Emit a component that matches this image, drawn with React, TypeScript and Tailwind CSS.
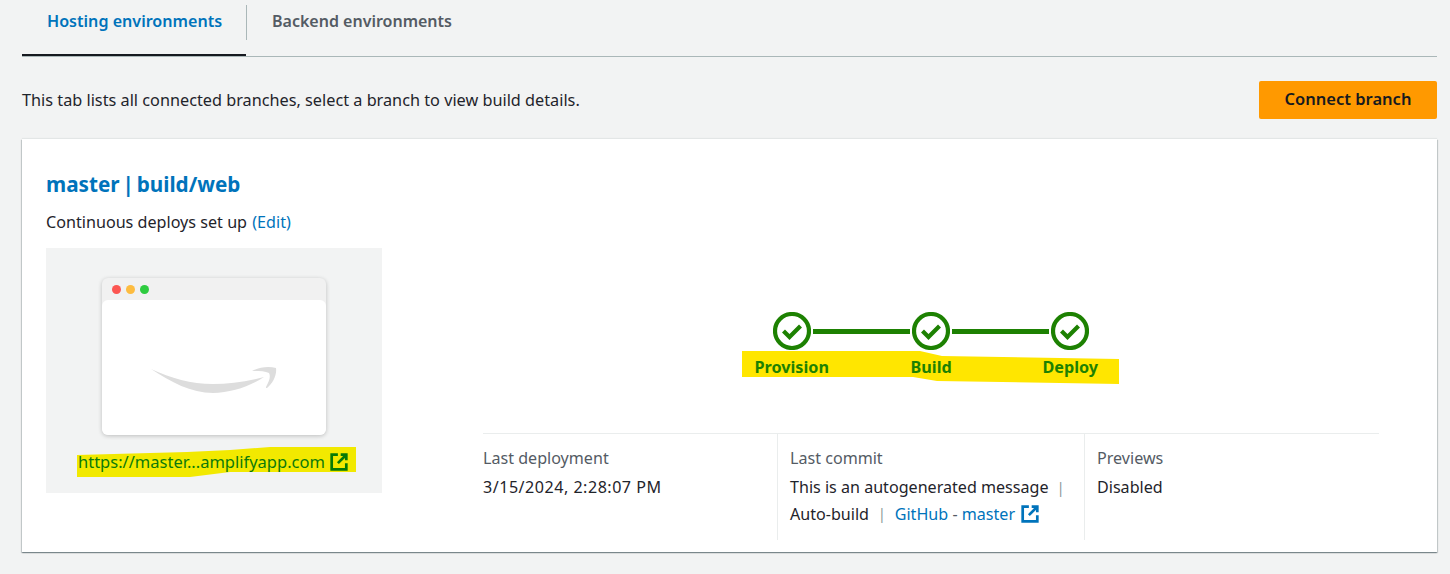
import React from 'react';

const font = { fontFamily: '"Noto Sans", "Open Sans", Arial, sans-serif' };

const ExternalIcon = ({ className }: { className?: string }) => (
  <svg viewBox="0 0 16 16" className={className} fill="none" stroke="currentColor" strokeWidth="2.4">
    <path d="M7 1.5H1.5v13h13V9" />
    <path d="M9.5 1.5h5v5" />
    <path d="M14.5 1.5 7 9" />
  </svg>
);

const CheckStep = () => (
  <svg viewBox="0 0 38 38" className="w-[38px] h-[38px] shrink-0" fill="none">
    <circle cx="19" cy="19" r="17" stroke="#1d8102" strokeWidth="4.2" />
    <path d="M10.5 19l6 6 11-11" stroke="#1d8102" strokeWidth="4.2" />
  </svg>
);

const Line = () => <div className="w-[97px] h-[5px] bg-[#1d8102] mx-auto" />;

const Stepper = () => (
  <div className="relative w-[377px] h-[90px]">
    {/* marker highlight drawn over the screenshot */}
    <svg className="absolute left-0 top-[39px]" width="377" height="34" viewBox="0 0 377 34">
      <path d="M0 0 L178 0 L200 5 L377 8 L377 33 L195 30 L171 26 L0 26 Z" fill="#ffe600" />
    </svg>
    <div className="relative flex pl-[31px]">
      <CheckStep />
      <div className="w-[101px] flex items-center"><Line /></div>
      <CheckStep />
      <div className="w-[101px] flex items-center"><Line /></div>
      <CheckStep />
    </div>
    <div className="relative flex mt-[6px] text-[16.2px] leading-[22px] font-bold text-[#1d8102]">
      <span className="w-[87px] pl-[13px] whitespace-nowrap">Provision</span>
      <span className="ml-[82px] w-[40px] whitespace-nowrap">Build</span>
      <span className="ml-[92px] whitespace-nowrap">Deploy</span>
    </div>
  </div>
);

const BrowserPreview = () => (
  <div className="w-[336px] h-[245px] bg-[#f2f3f3] flex flex-col items-center pt-[30px] shrink-0">
    <div className="w-[224px] h-[157px] rounded-[6px] bg-[#f1f1f1] shadow-[0_1px_4px_rgba(0,0,0,0.22)] flex flex-col">
      <div className="h-[22px] flex items-center gap-[5px] pl-[10px] shrink-0">
        <span className="w-[9px] h-[9px] rounded-full bg-[#fc5652]" />
        <span className="w-[9px] h-[9px] rounded-full bg-[#fdbc40]" />
        <span className="w-[9px] h-[9px] rounded-full bg-[#2ecc40]" />
      </div>
      <div className="flex-1 bg-white rounded-[6px] flex items-start justify-center pt-[66px]">
        <svg width="126" height="28" viewBox="0 0 126 28">
          <path d="M0 3 C20 16 40 27 62 27 C80 27 100 20 113 11 C95 16 78 18 62 18 C40 18 20 12 0 3 Z" fill="#dddddd" />
          <path d="M101 5 C108 1 118 0 125 2 C126 9 122 17 116 22 C115 22 115 22 115 21 C118 15 120 11 118 7 C114 5 108 5 101 5 Z" fill="#dddddd" />
        </svg>
      </div>
    </div>
    <div className="relative w-[279px] h-[30px] mt-[12px] ml-[5px]">
      <svg className="absolute left-0 top-0" width="279" height="30" viewBox="0 0 279 30">
        <path d="M0 8 L110 5 L153 3 L193 0 L279 0 L279 25 L153 25 L113 30 L0 30 Z" fill="#f2e900" />
      </svg>
      <div className="relative flex items-center pl-[1px] pt-[5px] text-[16.5px] leading-[20px] text-[#0b7a0b] whitespace-nowrap">
        https://master...amplifyapp.com
        <ExternalIcon className="w-[18px] h-[18px] ml-[5px] text-[#067a06]" />
      </div>
    </div>
  </div>
);

const App = () => (
  <div className="w-[1450px] h-[574px] overflow-hidden bg-[#f2f3f3] pl-[22px] pr-[13px] text-[#1f242b]" style={font}>
    <div className="h-[57px] border-b border-[#aab7b8] flex items-start">
      <div className="w-[224px] h-[56px] border-b-2 border-[#16191f] flex items-start pt-[10px] pl-[25px] text-[16.1px] leading-[22px] font-semibold text-[#0073bb] whitespace-nowrap">
        Hosting environments
      </div>
      <div className="w-px h-[35px] bg-[#aab7b8] mt-[5px]" />
      <div className="pl-[25px] pt-[10px] text-[16px] leading-[22px] font-semibold text-[#545b64] whitespace-nowrap">
        Backend environments
      </div>
    </div>

    <div className="flex items-center justify-between h-[82px] pt-[3px]">
      <p className="text-[16.25px] leading-[22px]">This tab lists all connected branches, select a branch to view build details.</p>
      <button className="w-[178px] h-[38px] rounded-[2px] bg-[#ff9900] text-[16.5px] font-semibold text-[#16191f]">Connect branch</button>
    </div>

    <div className="h-[413px] bg-white shadow-[0_1px_1px_rgba(0,28,36,0.3),1px_1px_1px_rgba(0,28,36,0.15),-1px_1px_1px_rgba(0,28,36,0.15),0_-1px_1px_rgba(0,28,36,0.06)] pl-[24px] pr-[58px] pt-[30px]">
      <h2 className="text-[20.7px] leading-[30px] font-bold text-[#0073bb] [word-spacing:-2.5px]">master | build/web</h2>
      <p className="mt-[12px] text-[16.15px] leading-[22px]">
        Continuous deploys set up <span className="text-[#0073bb] ml-[1px]">(Edit)</span>
      </p>
      <div className="flex mt-[15px]">
        <BrowserPreview />
        <div className="ml-[101px] flex-1 flex flex-col">
          <div className="flex justify-center h-[185px] pt-[64px] pr-[2px]">
            <Stepper />
          </div>
          <div className="grid grid-cols-[294px_307px_295px] border-t border-[#eaeded] h-[107px] text-[16.1px] leading-[26px]">
            <div className="pt-[11px]">
              <div className="text-[#545b64]">Last deployment</div>
              <div className="mt-[3px] tracking-[0.5px]">3/15/2024, 2:28:07 PM</div>
            </div>
            <div className="border-l border-[#eaeded] pl-[12px] pt-[11px]">
              <div className="text-[#545b64]">Last commit</div>
              <div className="mt-[3px]">
                This is an autogenerated message <span className="text-[#879596] text-[14px] mx-[4px]">|</span>
              </div>
              <div className="flex items-center whitespace-pre">
                <span>Auto-build</span>
                <span className="text-[#879596] text-[14px] mx-[9px]">|</span>
                <span className="text-[#0073bb]">GitHub <span className="text-[#545b64]">-</span> master</span>
                <ExternalIcon className="w-[18px] h-[18px] ml-[6px] text-[#0073bb]" />
              </div>
            </div>
            <div className="border-l border-[#eaeded] pl-[12px] pt-[11px]">
              <div className="text-[#545b64]">Previews</div>
              <div className="mt-[3px]">Disabled</div>
            </div>
          </div>
        </div>
      </div>
    </div>
  </div>
);

export default App;
